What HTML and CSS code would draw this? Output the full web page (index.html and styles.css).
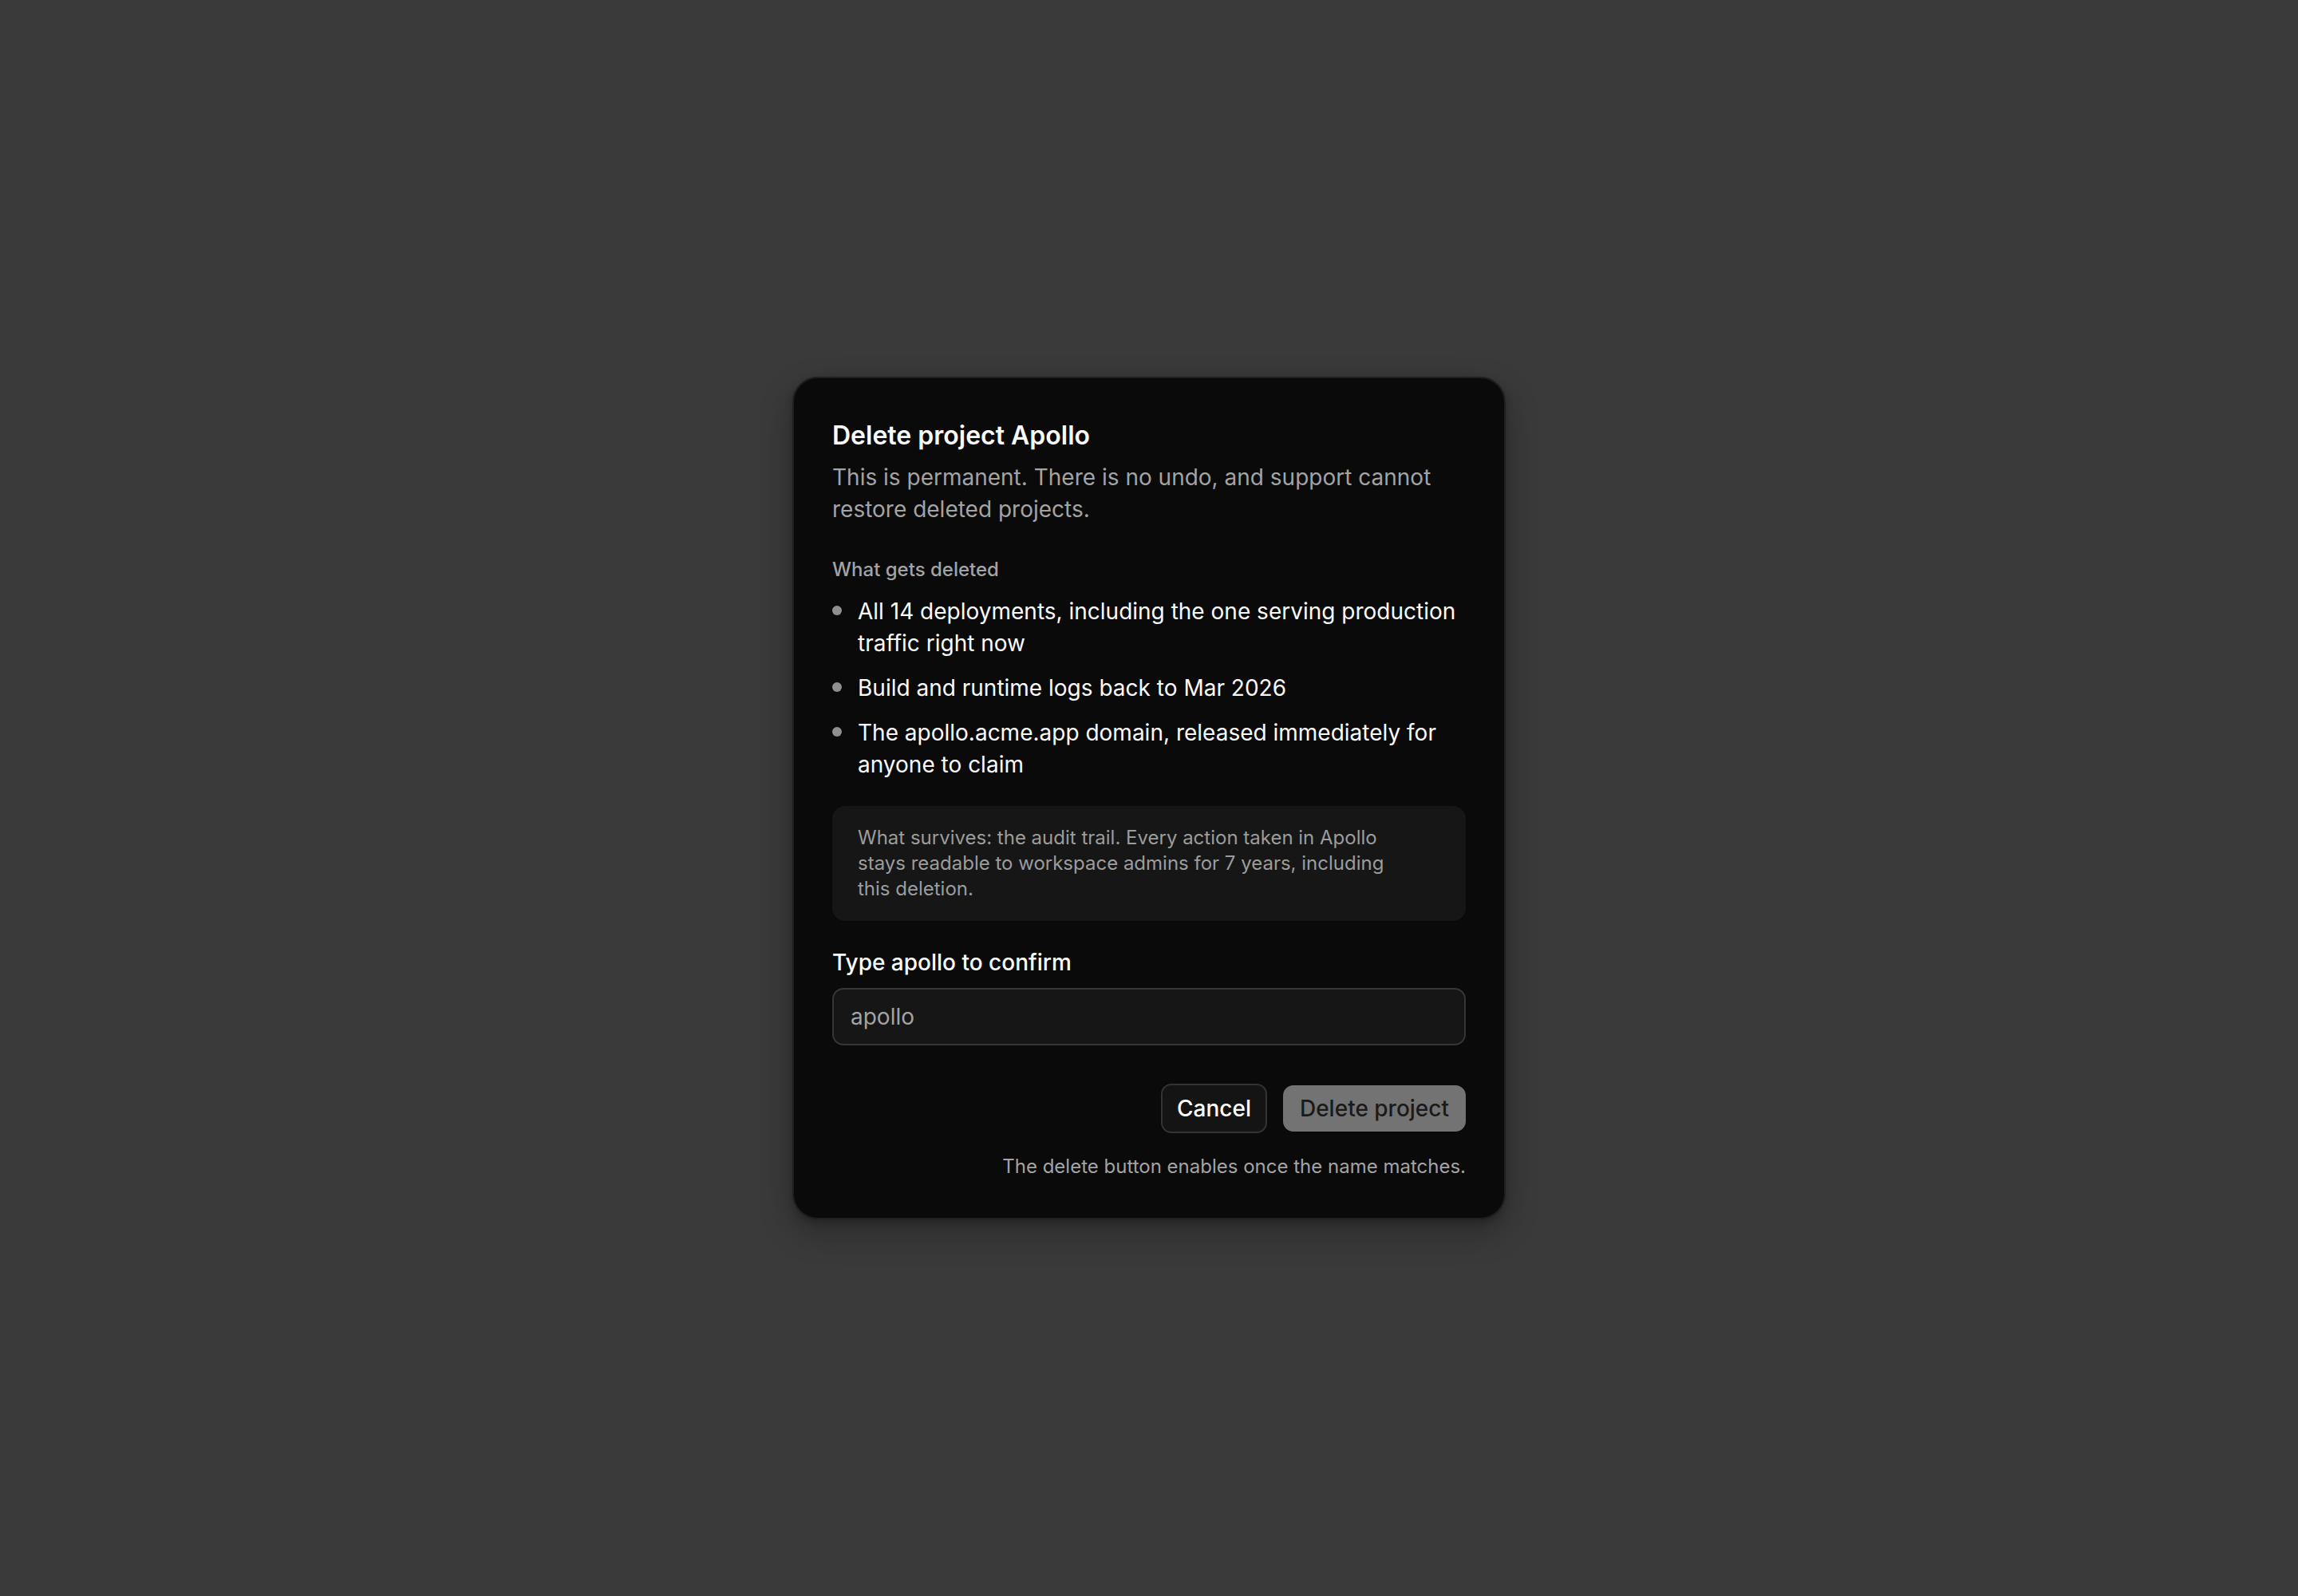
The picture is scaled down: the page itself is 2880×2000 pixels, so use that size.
FILE: index.html
```html
<!DOCTYPE html>
<html lang="en">
<head>
<meta charset="utf-8">
<title>Delete project Apollo</title>
<link rel="stylesheet" href="styles.css">
</head>
<body>
<div class="backdrop">
  <div class="modal" role="dialog" aria-labelledby="dlg-title">
    <h2 class="title" id="dlg-title">Delete project Apollo</h2>
    <p class="desc">This is permanent. There is no undo, and support cannot restore deleted projects.</p>

    <div class="section-label">What gets deleted</div>
    <ul class="list">
      <li>All 14 deployments, including the one serving production traffic right now</li>
      <li>Build and runtime logs back to Mar 2026</li>
      <li>The apollo.acme.app domain, released immediately for anyone to claim</li>
    </ul>

    <div class="survives">
      <p>What survives: the audit trail. Every action taken in Apollo stays readable to workspace admins for 7 years, including this deletion.</p>
    </div>

    <label class="confirm-label" for="confirm">Type apollo to confirm</label>
    <input class="confirm-input" id="confirm" type="text" value="apollo" readonly>

    <div class="actions">
      <button class="btn btn-cancel" type="button">Cancel</button>
      <button class="btn btn-delete" type="button">Delete project</button>
    </div>
    <p class="helper">The delete button enables once the name matches.</p>
  </div>
</div>
</body>
</html>
```

FILE: styles.css
```css
* {
  box-sizing: border-box;
}

html, body {
  margin: 0;
  padding: 0;
}

body {
  background: #3a3a3a;
  font-family: Inter, "Noto Sans", "Liberation Sans", sans-serif;
  color: #fafafa;
}

.backdrop {
  min-height: 2000px;
  display: flex;
  align-items: center;
  justify-content: center;
}

.modal {
  width: 894px;
  background: #0a0a0a;
  border: 2px solid #1f1f1f;
  border-radius: 32px;
  padding: 48px;
  box-shadow: 0 16px 40px rgba(0, 0, 0, 0.28), 0 4px 10px rgba(0, 0, 0, 0.2);
  display: flex;
  flex-direction: column;
}

.title {
  margin: 0;
  font-size: 32px;
  line-height: 48px;
  font-weight: 600;
  color: #fafafa;
}

.desc {
  margin: 8px 0 0;
  font-size: 28px;
  line-height: 40px;
  color: #a3a3a3;
}

.section-label {
  margin-top: 40px;
  font-size: 24px;
  line-height: 32px;
  font-weight: 500;
  color: #a3a3a3;
}

.list {
  list-style: none;
  margin: 16px 0 0;
  padding: 0;
  display: flex;
  flex-direction: column;
  gap: 16px;
}

.list li {
  position: relative;
  padding-left: 32px;
  font-size: 28px;
  line-height: 40px;
  color: #fafafa;
}

.list li::before {
  content: "";
  position: absolute;
  left: 0;
  top: 13px;
  width: 12px;
  height: 12px;
  border-radius: 50%;
  background: #8f8f8f;
}

.survives {
  margin-top: 32px;
  background: #161616;
  border-radius: 16px;
  padding: 24px 32px;
}

.survives p {
  margin: 0;
  max-width: 690px;
  font-size: 24px;
  line-height: 32px;
  color: #9c9c9c;
}

.confirm-label {
  margin-top: 32px;
  font-size: 28px;
  line-height: 40px;
  font-weight: 500;
  color: #fafafa;
}

.confirm-input {
  margin-top: 12px;
  width: 100%;
  height: 72px;
  background: #161616;
  border: 2px solid #363636;
  border-radius: 14px;
  padding: 0 21px;
  font-family: inherit;
  font-size: 28px;
  color: #a3a3a3;
  outline: none;
}

.actions {
  margin-top: 48px;
  display: flex;
  justify-content: flex-end;
  align-items: center;
  gap: 20px;
}

.btn {
  font-family: inherit;
  font-size: 28px;
  font-weight: 500;
  border-radius: 13px;
  cursor: pointer;
}

.btn-cancel {
  height: 62px;
  padding: 0 18px;
  background: #141414;
  border: 2px solid #333333;
  color: #ffffff;
}

.btn-delete {
  height: 58px;
  padding: 0 21px;
  background: #737373;
  border: none;
  color: #1a1a1a;
}

.helper {
  margin: 26px 0 0;
  text-align: right;
  font-size: 24px;
  line-height: 32px;
  color: #a3a3a3;
}
```
